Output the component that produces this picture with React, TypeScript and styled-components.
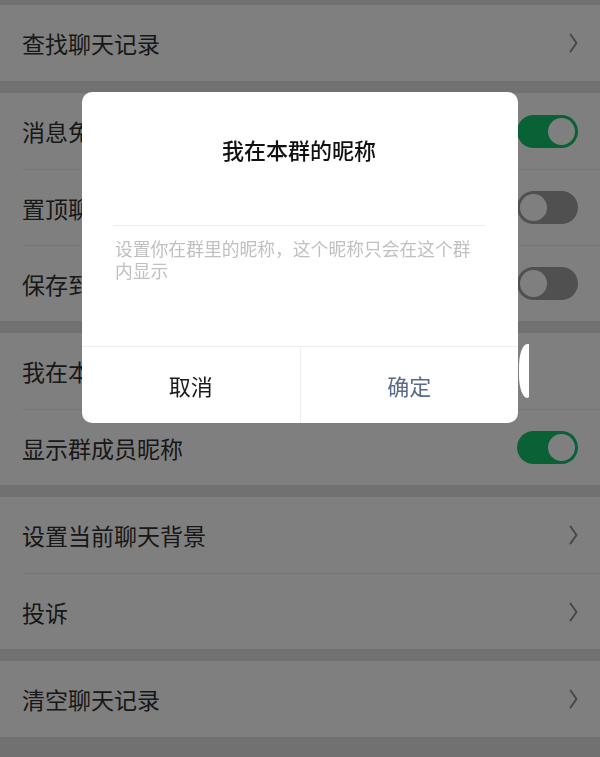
import React from "react";
import styled, { createGlobalStyle } from "styled-components";

const GlobalStyle = createGlobalStyle`
  html, body { margin: 0; padding: 0; }
  body {
    font-family: "Noto Sans CJK SC", "Noto Sans", sans-serif;
    background: #e6e6e6;
    overflow: hidden;
  }
`;

const Page = styled.div`
  height: 757px;
  background: #e2e2e2;
  padding-top: 5px;
  box-sizing: border-box;
`;

const Section = styled.section`
  background: #ffffff;
  margin-bottom: 12px;
`;

const Row = styled.div`
  height: 76px;
  margin-left: 22px;
  padding-right: 22px;
  display: flex;
  align-items: center;
  justify-content: space-between;
  box-sizing: border-box;
  & + & {
    border-top: 1px solid #ececec;
  }
`;

const Label = styled.span`
  font-size: 23px;
  color: #303030;
`;

const Track = styled.span<{ $on: boolean }>`
  width: 61px;
  height: 33px;
  border-radius: 17px;
  background: ${(p) => (p.$on ? "#12c46a" : "#a0a0a0")};
  display: flex;
  align-items: center;
  justify-content: ${(p) => (p.$on ? "flex-end" : "flex-start")};
  padding: 0 3px;
  box-sizing: border-box;
`;

const Knob = styled.span`
  width: 27px;
  height: 27px;
  border-radius: 50%;
  background: #ffffff;
`;

const Overlay = styled.div`
  position: fixed;
  inset: 0;
  background: rgba(0, 0, 0, 0.5);
`;

const Dialog = styled.div`
  position: fixed;
  left: 82px;
  top: 92px;
  width: 436px;
  height: 331px;
  background: #ffffff;
  border-radius: 10px;
  display: flex;
  flex-direction: column;
  overflow: hidden;
`;

const DialogBody = styled.div`
  flex: 1;
  padding: 42px 33px 0 31px;
`;

const Title = styled.div`
  font-size: 22px;
  line-height: 30px;
  font-weight: 500;
  color: #111111;
  text-align: center;
`;

const Input = styled.div`
  height: 61px;
  border-bottom: 1px solid #ececec;
`;

const Hint = styled.div`
  margin-top: 11px;
  padding-left: 2px;
  font-size: 17.8px;
  line-height: 22px;
  color: #c0c0c0;
`;

const Actions = styled.div`
  height: 76px;
  border-top: 1px solid #eeeeee;
  display: flex;
`;

const ActionButton = styled.button<{ $primary?: boolean }>`
  flex: 1;
  border: none;
  background: transparent;
  font-family: inherit;
  font-size: 22px;
  color: ${(p) => (p.$primary ? "#586a8a" : "#1a1a1a")};
  padding: 0;
  & + & {
    border-left: 1px solid #eeeeee;
  }
`;

const Glitch = styled.span`
  position: fixed;
  left: 519px;
  top: 344px;
  width: 10px;
  height: 54px;
  background: #ffffff;
  border-radius: 10px 0 2px 10px / 27px 0 2px 27px;
`;

const Chevron = () => (
  <svg width="9" height="20" viewBox="0 0 9 20">
    <polyline
      points="1.5,1.5 7.5,10 1.5,18.5"
      fill="none"
      stroke="#8e8e8e"
      strokeWidth="2"
      strokeLinecap="round"
      strokeLinejoin="round"
    />
  </svg>
);

const Toggle = ({ on }: { on: boolean }) => (
  <Track $on={on}>
    <Knob />
  </Track>
);

type Item = { label: string; kind: "chevron" | "on" | "off" | "none" };

const sections: Item[][] = [
  [{ label: "查找聊天记录", kind: "chevron" }],
  [
    { label: "消息免打扰", kind: "on" },
    { label: "置顶聊天", kind: "off" },
    { label: "保存到通讯录", kind: "off" },
  ],
  [
    { label: "我在本群的昵称", kind: "none" },
    { label: "显示群成员昵称", kind: "on" },
  ],
  [
    { label: "设置当前聊天背景", kind: "chevron" },
    { label: "投诉", kind: "chevron" },
  ],
  [{ label: "清空聊天记录", kind: "chevron" }],
];

export default function App() {
  return (
    <>
      <GlobalStyle />
      <Page>
        {sections.map((items, i) => (
          <Section key={i}>
            {items.map((it) => (
              <Row key={it.label}>
                <Label>{it.label}</Label>
                {it.kind === "chevron" && <Chevron />}
                {it.kind === "on" && <Toggle on />}
                {it.kind === "off" && <Toggle on={false} />}
              </Row>
            ))}
          </Section>
        ))}
      </Page>
      <Overlay />
      <Glitch />
      <Dialog>
        <DialogBody>
          <Title>我在本群的昵称</Title>
          <Input />
          <Hint>设置你在群里的昵称，这个昵称只会在这个群内显示</Hint>
        </DialogBody>
        <Actions>
          <ActionButton>取消</ActionButton>
          <ActionButton $primary>确定</ActionButton>
        </Actions>
      </Dialog>
    </>
  );
}
